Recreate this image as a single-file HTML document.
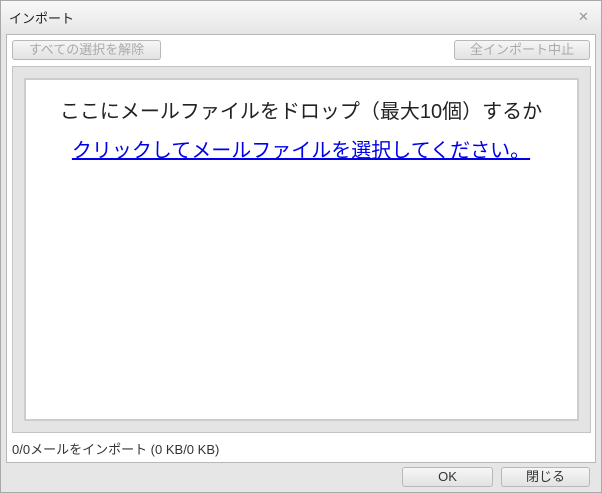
<!DOCTYPE html>
<html><head><meta charset="utf-8"><style>
*{box-sizing:border-box;margin:0;padding:0}
body{width:602px;height:493px;overflow:hidden;background:#fff;font-family:"Liberation Sans","Noto Sans CJK JP",sans-serif;position:relative}
.win{position:absolute;left:0;top:0;width:602px;height:493px;border:1px solid #a8a8a8;background:linear-gradient(#f8f8f8,#e6e6e6 33px,#e6e6e6)}
.title{position:absolute;left:9px;top:8px;font-size:13px;color:#222}
.x{position:absolute;left:578px;top:9px;font-size:13px;color:#999}
.panel{position:absolute;left:6px;top:34px;width:590px;height:429px;background:#fff;border:1px solid #b8b8b8}
.btn{position:absolute;height:20px;border:1px solid #b8b8b8;border-radius:3px;background:linear-gradient(#f6f6f6,#e2e2e2);font-size:13px;text-align:center;line-height:18px;color:#aaa}
.drop{position:absolute;left:12px;top:66px;width:579px;height:367px;background:#e4e4e4;border:1px solid #c4c4c4}
.inner{position:absolute;left:24px;top:78px;width:555px;height:343px;background:#fff;border:2px solid #cdcdcd}
.l1{position:absolute;left:0;width:602px;top:95px;text-align:center;font-size:20px;color:#222}
.l2{position:absolute;left:0;width:602px;top:134px;text-align:center;font-size:20px;color:#0000ee;text-decoration:underline}
.st{position:absolute;left:12px;top:439px;font-size:13px;color:#333}
</style></head><body>
<div class="win"></div>
<div class="title">インポート</div>
<div class="x">✕</div>
<div class="panel"></div>
<div class="btn" style="left:12px;top:40px;width:149px">すべての選択を解除</div>
<div class="btn" style="left:454px;top:40px;width:136px">全インポート中止</div>
<div class="drop"></div>
<div class="inner"></div>
<div class="l1">ここにメールファイルをドロップ（最大10個）するか</div>
<div class="l2">クリックしてメールファイルを選択してください。</div>
<div class="st">0/0メールをインポート (0 KB/0 KB)</div>
<div class="btn" style="left:402px;top:467px;width:91px;color:#333">OK</div>
<div class="btn" style="left:501px;top:467px;width:89px;color:#333">閉じる</div>
</body></html>
